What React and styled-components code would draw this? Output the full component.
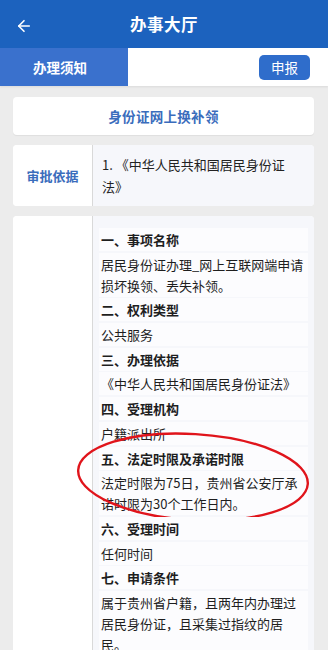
import styled, { createGlobalStyle } from 'styled-components';
import { ArrowLeft } from 'lucide-react';

const GlobalStyle = createGlobalStyle`
	* { box-sizing: border-box; }
	body {
		margin: 0;
		background: #ececec;
		font-family: "Noto Sans CJK SC", "Noto Sans", sans-serif;
		color: #222;
	}
`;

//Header
const StyledHeader = styled.header`
	height: 48px;
	display: flex;
	align-items: center;
	justify-content: center;
	background: #1c62be;
	color: #fff;
	position: relative;
`;

const StyledBack = styled.div`
	position: absolute;
	left: 15px;
	top: 17px;
	display: flex;
	color: #fff;
`;

const StyledTitle = styled.h1`
	margin: 0;
	font-size: 16.5px;
	font-weight: 700;
	letter-spacing: 0.5px;
`;

//Tabs
const StyledTabs = styled.div`
	height: 38px;
	display: flex;
	align-items: center;
	background: #fff;
	box-shadow: 0 1px 2px rgba(0, 0, 0, 0.08);
`;

const StyledTab = styled.div`
	width: 128px;
	height: 100%;
	display: flex;
	align-items: center;
	justify-content: center;
	background: ${({ active }) => (active ? '#3a71cd' : '#fff')};
	color: ${({ active }) => (active ? '#fff' : '#333')};
	font-size: 13.5px;
	font-weight: 700;
	padding-right: 8px;
`;

const StyledSubmit = styled.button`
	margin-left: auto;
	margin-right: 18px;
	width: 51px;
	height: 25px;
	border: none;
	border-radius: 5px;
	background: #2f6dcb;
	color: #fff;
	font-family: inherit;
	font-size: 13.5px;
	padding: 0;
`;

//Content
const StyledContent = styled.main`
	padding: 11px 14px 20px 13px;
	display: flex;
	flex-direction: column;
	gap: 10px;
`;

const StyledNameCard = styled.div`
	height: 38px;
	display: flex;
	align-items: center;
	justify-content: center;
	background: #fff;
	border-radius: 4px;
	box-shadow: 0 1px 1px rgba(0, 0, 0, 0.06);
	color: #3a6cbc;
	font-size: 13.5px;
	font-weight: 700;
	letter-spacing: 0.3px;
`;

const StyledTable = styled.div`
	display: flex;
	background: #fff;
	border-radius: 4px;
	overflow: hidden;
`;

const StyledLabel = styled.div`
	width: 80px;
	flex-shrink: 0;
	display: flex;
	align-items: center;
	justify-content: center;
	border-right: 1px solid #d9d9d9;
	color: #3a6cbc;
	font-size: 13px;
	font-weight: 700;
	background: #fff;
`;

const StyledValue = styled.div`
	flex: 1;
	background: #f6f7fb;
	padding: ${({ list }) => (list ? '12px 6px 10px 6px' : '9px 10px 8px 9px')};
	font-size: 13px;
	line-height: 22px;
	color: #222;
	display: flex;
	flex-direction: column;
	gap: 1.7px;
`;

const StyledRow = styled.div`
	background: #fcfcfe;
	padding: 1px 2px;
	line-height: 21px;
	font-size: 13px;
	font-weight: ${({ heading }) => (heading ? 700 : 400)};
	color: #1e1e1e;
`;

const StyledSection = styled.div`
	position: relative;
	display: flex;
	flex-direction: column;
	gap: 1.7px;
`;

// red hand-drawn mark over the time-limit section
const StyledCircle = styled.svg`
	position: absolute;
	left: -24px;
	top: -16px;
	width: 236px;
	height: 92px;
	overflow: visible;
	pointer-events: none;
`;

const items = [
    ['一、事项名称', '居民身份证办理_网上互联网端申请损坏换领、丢失补领。'],
    ['二、权利类型', '公共服务'],
    ['三、办理依据', '《中华人民共和国居民身份证法》'],
    ['四、受理机构', '户籍派出所'],
    ['五、法定时限及承诺时限', '法定时限为75日，贵州省公安厅承诺时限为30个工作日内。', true],
    ['六、受理时间', '任何时间'],
    ['七、申请条件', '属于贵州省户籍，且两年内办理过居民身份证，且采集过指纹的居民。'],
];

const App = () => {
    return (
        <>
            <GlobalStyle />
            <StyledHeader>
                <StyledBack>
                    <ArrowLeft size={18} strokeWidth={2.2} />
                </StyledBack>
                <StyledTitle>办事大厅</StyledTitle>
            </StyledHeader>

            <StyledTabs>
                <StyledTab active>办理须知</StyledTab>
                <StyledSubmit>申报</StyledSubmit>
            </StyledTabs>

            <StyledContent>
                <StyledNameCard>身份证网上换补领</StyledNameCard>

                <StyledTable>
                    <StyledLabel>审批依据</StyledLabel>
                    <StyledValue>1. 《中华人民共和国居民身份证法》</StyledValue>
                </StyledTable>

                <StyledTable>
                    <StyledLabel />
                    <StyledValue list>
                        {items.map(([title, text, marked]) => (
                            <StyledSection key={title}>
                                <StyledRow heading>{title}</StyledRow>
                                <StyledRow>{text}</StyledRow>
                                {marked && (
                                    <StyledCircle viewBox="0 0 236 92">
                                        <ellipse
                                            cx="118"
                                            cy="46"
                                            rx="115"
                                            ry="43"
                                            fill="none"
                                            stroke="#e0141b"
                                            strokeWidth="2.4"
                                            transform="rotate(3.5 118 46)"
                                        />
                                    </StyledCircle>
                                )}
                            </StyledSection>
                        ))}
                    </StyledValue>
                </StyledTable>
            </StyledContent>
        </>
    );
};

export default App;
